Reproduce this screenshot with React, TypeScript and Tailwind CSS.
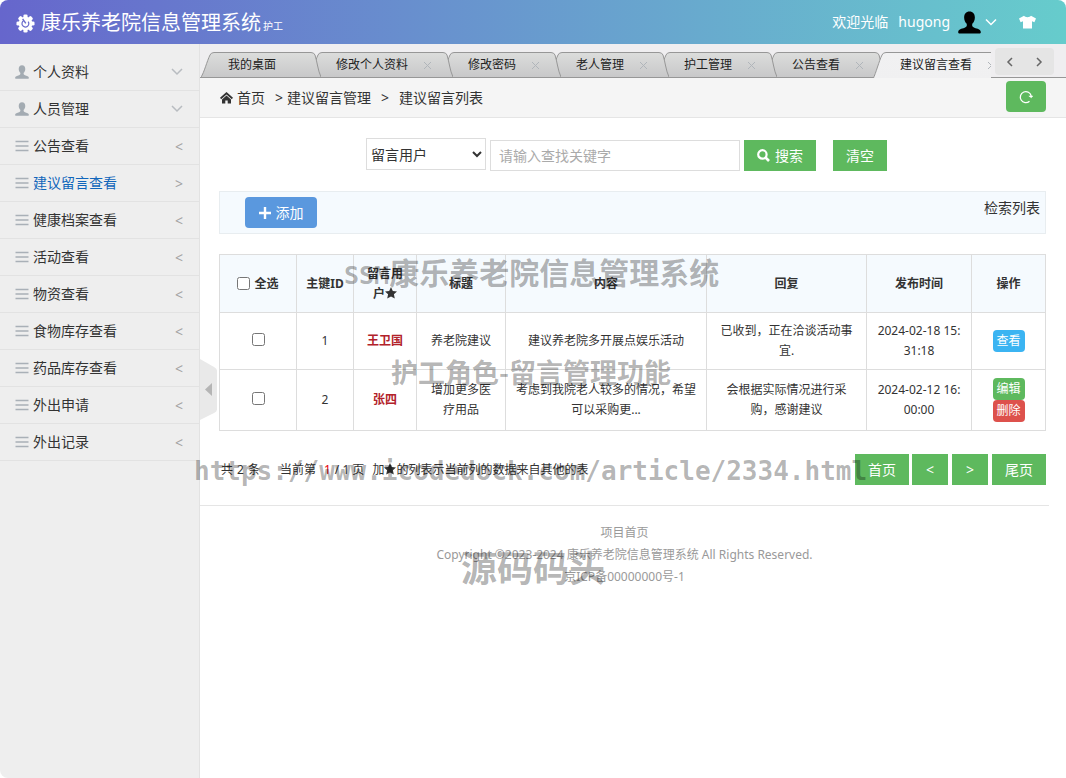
//
// 康乐养老院信息管理系统 - 建议留言列表
//

const bodyFont = "font-['Noto_Sans','Noto_Sans_CJK_SC',sans-serif]";

type MenuItem = { label: string; group?: boolean; active?: boolean };

const menu: MenuItem[] = [
    { label: "个人资料", group: true },
    { label: "人员管理", group: true },
    { label: "公告查看" },
    { label: "建议留言查看", active: true },
    { label: "健康档案查看" },
    { label: "活动查看" },
    { label: "物资查看" },
    { label: "食物库存查看" },
    { label: "药品库存查看" },
    { label: "外出申请" },
    { label: "外出记录" },
];

const tabs = ["我的桌面", "修改个人资料", "修改密码", "老人管理", "护工管理", "公告查看", "建议留言查看"];

const rows = [
    {
        id: 1,
        user: "王卫国",
        title: "养老院建议",
        content: "建议养老院多开展点娱乐活动",
        reply: "已收到，正在洽谈活动事宜.",
        time: "2024-02-18 15:31:18",
        editable: false,
    },
    {
        id: 2,
        user: "张四",
        title: "增加更多医疗用品",
        content: "考虑到我院老人较多的情况，希望可以采购更...",
        reply: "会根据实际情况进行采购，感谢建议",
        time: "2024-02-12 16:00:00",
        editable: true,
    },
];

function GearIcon() {
    return (
        <svg width="19" height="19" viewBox="0 0 20 20" aria-hidden="true">
            <g fill="#fff">
                {[0, 45, 90, 135].map((a) => (
                    <rect key={a} x="7.8" y="0.5" width="4.4" height="19" rx="1.4" transform={`rotate(${a} 10 10)`} />
                ))}
                <circle cx="10" cy="10" r="7.2" />
            </g>
            <path d="M8.300 6.900A3.600 3.600 0 1 0 12.800 8" fill="none" stroke="#6a6ccc" strokeWidth="1.300" />
            <path d="M7 5.200L10.300 9.800" stroke="#6a6ccc" strokeWidth="1.500" />
        </svg>
    );
}

function PersonIcon({ size, color }: { size: number; color: string }) {
    return (
        <svg width={size} height={size} viewBox="0 0 24 24" fill={color} aria-hidden="true">
            <path d="M12 .5c3.600 0 5.600 2.500 5.600 6.200 0 3-1.300 5.300-2.700 6.700-.4 2.200 0 3.300 2.200 4.100 3.300 1.100 6.400 1.700 6.700 4.300.1 1.200-.6 1.700-1.700 1.700H1.900c-1.100 0-1.800-.5-1.700-1.700.3-2.600 3.400-3.200 6.700-4.300 2.200-.8 2.600-1.900 2.200-4.100-1.400-1.400-2.700-3.700-2.700-6.700C6.400 3 8.400.5 12 .5z" />
        </svg>
    );
}

function ListIcon() {
    return (
        <svg width="14" height="12" viewBox="0 0 14 12" className="shrink-0" aria-hidden="true">
            <path d="M.5 1.500h13M.5 6h13M.5 10.500h13" stroke="#a9b0b7" strokeWidth="1.400" />
        </svg>
    );
}

function Chevron({ d, color }: { d: string; color: string }) {
    return (
        <svg width="12" height="12" viewBox="0 0 12 12" fill="none" stroke={color} strokeWidth="1.500" aria-hidden="true">
            <path d={d} />
        </svg>
    );
}

function StarIcon() {
    return (
        <svg width="12" height="12" viewBox="0 0 12 12" className="inline-block align-[-1px]" fill="currentColor" aria-hidden="true">
            <path d="M6 0l1.800 3.900 4.200.5-3.100 2.900.9 4.300L6 9.400l-3.800 2.200.9-4.300L0 4.400l4.200-.5z" />
        </svg>
    );
}

function TopBar() {
    return (
        <header className="flex h-11 items-center justify-between rounded-t-lg bg-linear-to-r from-[#6666cc] to-[#66cccc] pl-4 pr-[30px] text-white">
            <h1 className="flex items-center pt-[2px] text-[20px] leading-[42px]">
                <GearIcon />
                <span className="ml-[6px]">康乐养老院信息管理系统</span>
                <small className="ml-[2px] mt-[6px] text-[10px]">护工</small>
            </h1>
            <div className="flex items-center text-[14px]">
                <span className="pb-[2px]">欢迎光临</span>
                <button type="button" className="ml-[10px] flex items-center">
                    <span className="pb-[2px]">hugong</span>
                    <span className="ml-2"><PersonIcon size={23} color="#000" /></span>
                    <span className="ml-1"><Chevron d="M1 3.500l5 5 5-5" color="#fff" /></span>
                </button>
                <button type="button" aria-label="换肤" className="ml-[22px]">
                    <svg width="17" height="14" viewBox="0 0 17 14" fill="#fff">
                        <path d="M5 .8C6 2.700 11 2.700 12 .8L17 3.500 15.400 7.200 13 6.300V13.500H4V6.300L1.600 7.200 0 3.500z" />
                    </svg>
                </button>
            </div>
        </header>
    );
}

function Sidebar() {
    return (
        <aside className="relative w-[200px] shrink-0 rounded-bl-lg border-r border-[#e2e2e2] bg-[#eeeeee] pt-[10px]">
            <nav>
                <ul>
                    {menu.map((item) => (
                        <li key={item.label} className="border-b border-[#e2e2e2]">
                            <a
                                href="#"
                                className={`flex h-9 items-center pl-[15px] pr-4 text-[14px] ${item.active ? "text-[#1166bb]" : "text-[#333]"}`}
                            >
                                {item.group ? <PersonIcon size={14} color="#a3abb2" /> : <ListIcon />}
                                <span className="ml-1 flex-1 pb-[2px]">{item.label}</span>
                                {item.group ? (
                                    <Chevron d="M1 3l5 5 5-5" color="#b8bcc0" />
                                ) : (
                                    <span className="text-[14px] text-[#a3a3a3]">{item.active ? ">" : "<"}</span>
                                )}
                            </a>
                        </li>
                    ))}
                </ul>
            </nav>
            {/* 收起侧栏 */}
            <button type="button" aria-label="收起菜单" className="absolute -right-[18px] top-[315px]">
                <svg width="17" height="62" viewBox="0 0 17 62">
                    <path d="M0 0l14 8q3 1.500 3 3.500v39q0 2-3 3.500L0 61z" fill="#e9e9e9" />
                    <path d="M12 24v13L5 30.500z" fill="#b5b5b5" />
                </svg>
            </button>
        </aside>
    );
}

function Tab({ label, index }: { label: string; index: number }) {
    const active = index === tabs.length - 1;
    const w = label.length === 4 ? 120 : 144;
    return (
        <li
            className={`relative -mr-3 h-[26px] shrink-0 ${w === 120 ? "w-[120px]" : "w-36"}`}
            style={{ zIndex: active ? tabs.length : tabs.length - 1 - index }}
        >
            <svg width={w} height="26" className="absolute inset-0" aria-hidden="true">
                <defs>
                    <linearGradient id={`tab${index}`} x1="0" y1="0" x2="0" y2="1">
                        <stop offset="0" stopColor={active ? "#f1f1f2" : "#dcdddc"} />
                        <stop offset="1" stopColor={active ? "#f0f0f1" : "#c8c8c9"} />
                    </linearGradient>
                </defs>
                <path
                    d={`M0 ${active ? 27 : 25}C3 21 6 9 9 3Q10 .5 13 .5H${w - 10}Q${w - 7} .5 ${w - 6} 3C${w - 4} 9 ${w - 3} 19 ${w} ${active ? 27 : 25}`}
                    fill={`url(#tab${index})`}
                    stroke="#979797"
                />
            </svg>
            <button type="button" className="relative block h-full pl-[27px] text-[12px] leading-[26px] text-[#222]">
                {label}
            </button>
            {index > 0 && (
                <button type="button" aria-label={`关闭${label}`} className="absolute right-[21px] top-[9px]">
                    <svg width="9" height="9" viewBox="0 0 9 9" stroke="#b0b5ba">
                        <path d="M1 1l7 7M8 1L1 8" />
                    </svg>
                </button>
            )}
        </li>
    );
}

function TabBar() {
    return (
        <div className="relative isolate flex h-[34px] bg-[#efeef0]">
            <div className="absolute inset-x-0 bottom-0 h-px bg-[#979797]" />
            <ul className="relative flex min-w-0 flex-1 items-end overflow-hidden pl-px">
                {tabs.map((label, i) => <Tab key={label} label={label} index={i} />)}
            </ul>
            <div className="ml-1 mr-3 mt-1 flex h-[27px] w-[59px] items-center justify-around rounded bg-[#e5e5e5]">
                <button type="button" aria-label="向左"><Chevron d="M8 2L4 6l4 4" color="#666" /></button>
                <button type="button" aria-label="向右"><Chevron d="M4 2l4 4-4 4" color="#666" /></button>
            </div>
        </div>
    );
}

function Breadcrumb() {
    return (
        <nav className="flex h-10 items-center justify-between border-b border-[#e5e5e5] bg-[#f5f5f5] pl-5 pr-5 text-[14px] text-[#333]">
            <div className="flex items-center">
                <svg width="13" height="12" viewBox="0 0 13 12" fill="#333" aria-hidden="true">
                    <path d="M6.500 0L13 5.800l-1.200 1.400L6.500 2.600 1.200 7.200 0 5.800z" />
                    <path d="M6.500 3.600L11 7.500V11.500H7.700V8.500H5.300V11.500H2V7.500z" />
                </svg>
                <a href="#" className="ml-1">首页</a>
                <span className="ml-[10px] mr-1">&gt;</span>
                <span>建议留言管理</span>
                <span className="mx-[10px]">&gt;</span>
                <span>建议留言列表</span>
            </div>
            <button type="button" aria-label="刷新" className="mb-[2px] flex h-[31px] w-10 items-center justify-center rounded bg-[#5eb95e]">
                <svg width="14" height="14" viewBox="0 0 14 14" fill="none" stroke="#fff" strokeWidth="1.300">
                    <path d="M10.500 11.200A5.500 5.500 0 1 1 12.200 6" />
                    <path d="M9.800 6h4L12.300 7.800z" fill="#fff" strokeWidth=".5" />
                </svg>
            </button>
        </nav>
    );
}

function SearchForm() {
    return (
        <form className="mr-3 mt-5 flex justify-center text-[14px]" onSubmit={(e) => e.preventDefault()}>
            <select aria-label="查询字段" className="h-8 w-[120px] border border-[#ddd] bg-white text-[#333]">
                <option>留言用户</option>
            </select>
            <input
                aria-label="关键字"
                placeholder="请输入查找关键字"
                className="ml-1 mt-[2px] h-[31px] w-[250px] border border-[#ddd] px-2 placeholder:text-[#aaa]"
            />
            <button type="submit" className="ml-1 mt-[2px] flex h-[31px] w-[72px] items-center justify-center bg-[#5eb95e] text-white">
                <svg width="13" height="13" viewBox="0 0 13 13" fill="none" stroke="#fff" className="mr-[5px]" aria-hidden="true">
                    <circle cx="5.400" cy="5.400" r="4.200" strokeWidth="2.200" />
                    <path d="M8.500 8.500l3.500 3.500" strokeWidth="2.600" />
                </svg>
                搜索
            </button>
            <button type="reset" className="ml-[17px] mt-[2px] h-[31px] w-[54px] bg-[#5eb95e] text-white">清空</button>
        </form>
    );
}

function MessageTable() {
    const cell = "border border-[#ddd] px-2";
    const action = "mx-auto block h-[22px] w-8 rounded text-[12px] leading-[22px] text-white";
    return (
        <table className="mt-5 w-full table-fixed border-collapse text-center text-[12px] leading-5 text-[#333]">
            <colgroup>
                <col className="w-[77px]" />
                <col className="w-[57px]" />
                <col className="w-[63px]" />
                <col className="w-[89px]" />
                <col />
                <col className="w-[160px]" />
                <col className="w-[105px]" />
                <col className="w-[74px]" />
            </colgroup>
            <thead className="bg-[#f5fafe]">
                <tr className="h-[58px]">
                    <th className={cell}>
                        <label className="flex items-center justify-center gap-1">
                            <input type="checkbox" className="size-[13px]" />全选
                        </label>
                    </th>
                    <th className="whitespace-nowrap border border-[#ddd]">主键ID</th>
                    <th className={cell}>留言用户<StarIcon /></th>
                    <th className={cell}>标题</th>
                    <th className={cell}>内容</th>
                    <th className={cell}>回复</th>
                    <th className={cell}>发布时间</th>
                    <th className={cell}>操作</th>
                </tr>
            </thead>
            <tbody>
                {rows.map((row) => (
                    <tr key={row.id} className={row.editable ? "h-[61px]" : "h-[57px]"}>
                        <td className={cell}>
                            <input type="checkbox" aria-label={`选择 ${row.id}`} className="mb-1 size-[13px] align-middle" />
                        </td>
                        <td className={cell}>{row.id}</td>
                        <td className={`${cell} font-bold text-[#b2222a]`}>{row.user}</td>
                        <td className="border border-[#ddd] px-3">{row.title}</td>
                        <td className={cell}>{row.content}</td>
                        <td className={cell}>{row.reply}</td>
                        <td className={`${cell} break-all`}>{row.time}</td>
                        <td className={cell}>
                            {row.editable ? (
                                <>
                                    <button type="button" className={`${action} bg-[#5eb95e]`}>编辑</button>
                                    <button type="button" className={`${action} bg-[#dd514c]`}>删除</button>
                                </>
                            ) : (
                                <button type="button" className={`${action} bg-[#3bb4f2]`}>查看</button>
                            )}
                        </td>
                    </tr>
                ))}
            </tbody>
        </table>
    );
}

function Pager() {
    const btn = "h-[31px] bg-[#5eb95e] text-[14px] text-white";
    return (
        <div className="mt-[23px] flex items-center justify-between text-[12px] text-[#333]">
            <p className="flex items-center pl-[2px]">
                <span className="flex gap-1"><span>共</span><span>2</span><span>条</span></span>
                <span className="ml-5">当前第</span>
                <span className="ml-2 text-red-600">1</span>
                <span className="ml-1">/ 1 页</span>
                <span className="ml-2">加<StarIcon />的列表示当前列的数据来自其他的表</span>
            </p>
            <div className="flex">
                <button type="button" className={`${btn} w-[54px]`}>首页</button>
                <button type="button" className={`${btn} ml-[3px] w-9`}>&lt;</button>
                <button type="button" className={`${btn} ml-1 w-9`}>&gt;</button>
                <button type="button" className={`${btn} ml-1 w-[54px]`}>尾页</button>
            </div>
        </div>
    );
}

// 页面水印文字
function Watermark() {
    const mark = "absolute whitespace-nowrap text-black/30";
    return (
        <div className="pointer-events-none absolute inset-0 z-20 overflow-hidden font-['Noto_Sans_CJK_SC',sans-serif] font-bold">
            <p className={`${mark} left-[344px] top-[251px] text-[30px] leading-10`}>
                <span className="font-['DejaVu_Sans_Mono',monospace] text-[25px]">SSM</span>康乐养老院信息管理系统
            </p>
            <p className={`${mark} left-[391px] top-[352px] text-[27px] leading-10`}>护工角色-留言管理功能</p>
            <p className={`${mark} left-[194px] top-[451px] font-['DejaVu_Sans_Mono',monospace] text-[26px] leading-10`}>
                https://www.icodedock.com/article/2334.html
            </p>
            <p className={`${mark} left-[461px] top-[542px] text-[36px] leading-[48px]`}>源码码头</p>
        </div>
    );
}

export default function App() {
    return (
        <div className={`relative flex min-h-screen flex-col bg-white ${bodyFont}`}>
            <TopBar />
            <div className="flex flex-1">
                <Sidebar />
                <main className="min-w-0 flex-1">
                    <TabBar />
                    <Breadcrumb />
                    <div className="pl-[19px] pr-5">
                        <SearchForm />
                        <div className="mt-5 flex h-[43px] justify-between border border-[#e8edf0] bg-[#f5fafe] pl-[25px] pr-[5px] text-[14px] text-[#333]">
                            <button type="button" className="mt-[5px] flex h-[31px] w-[72px] items-center justify-center rounded bg-[#5a98de] text-white">
                                <svg width="12" height="12" viewBox="0 0 12 12" stroke="#fff" strokeWidth="2.400" className="mr-[5px]" aria-hidden="true">
                                    <path d="M6 0v12M0 6h12" />
                                </svg>
                                添加
                            </button>
                            <span className="leading-8">检索列表</span>
                        </div>
                        <MessageTable />
                        <Pager />
                    </div>
                    <footer className="mr-[17px] mt-5 border-t border-[#e5e5e5] pt-4 text-center text-[12px] leading-[22px] text-[#999]">
                        <p><a href="#">项目首页</a></p>
                        <p>Copyright ©2023-2024 康乐养老院信息管理系统 All Rights Reserved.</p>
                        <p>京ICP备00000000号-1</p>
                    </footer>
                </main>
            </div>
            <Watermark />
        </div>
    );
}
